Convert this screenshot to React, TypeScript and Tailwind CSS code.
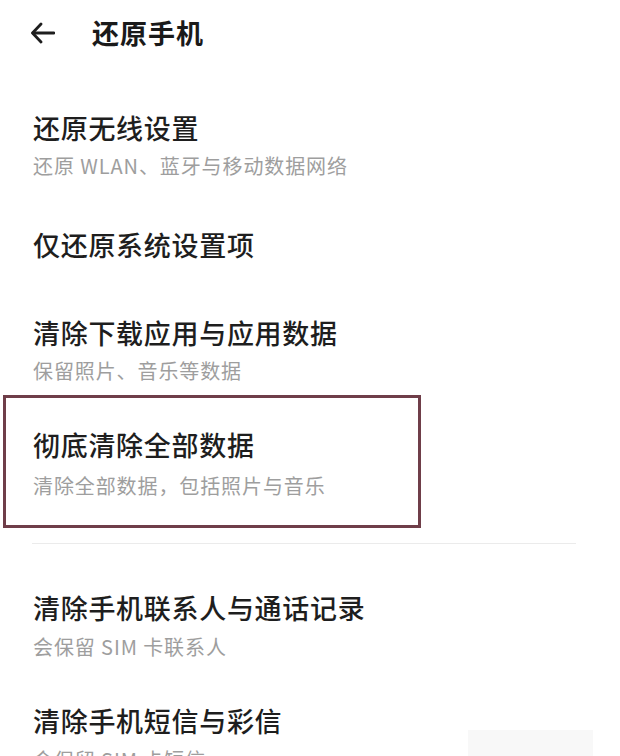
import React from "react";

const font = { fontFamily: '"Noto Sans CJK SC", "Noto Sans", sans-serif' };

function Title({ children }: { children: React.ReactNode }) {
  return (
    <div className="text-[27px] leading-[38px] tracking-[0.7px] text-[#1e1e1e] font-medium whitespace-nowrap">
      {children}
    </div>
  );
}

function Sub({ children, className = "" }: { children: React.ReactNode; className?: string }) {
  return (
    <div className={"text-[20px] leading-[28px] tracking-[0.9px] text-[#9e9e9e] whitespace-nowrap " + className}>
      {children}
    </div>
  );
}

export default function App() {
  return (
    <div
      className="relative w-[620px] h-[756px] overflow-hidden bg-white flex flex-col"
      style={font}
    >
      <div className="h-[66px] flex items-center pl-[31px] shrink-0">
        <svg width="24" height="22" viewBox="0 0 24 22" fill="none" stroke="#1e1e1e" strokeWidth="2.8" strokeLinecap="round" strokeLinejoin="round">
          <path d="M23 11H2" />
          <path d="M10 2L1.5 11L10 20" />
        </svg>
        <div className="ml-[37px] text-[27px] leading-[38px] tracking-[1px] font-bold text-[#1a1a1a]">
          还原手机
        </div>
      </div>

      <div className="pl-[33px] pt-[43px] shrink-0">
        <Title>还原无线设置</Title>
        <Sub className="mt-[5px]">还原 WLAN、蓝牙与移动数据网络</Sub>
      </div>

      <div className="pl-[33px] pt-[46px] shrink-0">
        <Title>仅还原系统设置项</Title>
      </div>

      <div className="pl-[33px] pt-[50px] shrink-0">
        <Title>清除下载应用与应用数据</Title>
        <Sub className="mt-[5px]">保留照片、音乐等数据</Sub>
      </div>

      <div className="ml-[3px] mt-[10px] w-[418px] border-[3px] border-[#6f3e49] pl-[27px] pt-[28px] pb-[25px] shrink-0">
        <Title>彻底清除全部数据</Title>
        <Sub className="mt-[8px]">清除全部数据，包括照片与音乐</Sub>
      </div>

      <div className="ml-[32px] mt-[15px] w-[544px] h-px bg-[#ebebeb] shrink-0" />

      <div className="pl-[33px] pt-[45px] shrink-0">
        <Title>清除手机联系人与通话记录</Title>
        <Sub className="mt-[6px]">会保留 SIM 卡联系人</Sub>
      </div>

      <div className="pl-[33px] pt-[41px] shrink-0">
        <Title>清除手机短信与彩信</Title>
        <Sub className="mt-[6px]">会保留 SIM 卡短信</Sub>
      </div>

      <div className="absolute left-[468px] top-[730px] w-[125px] h-[26px] bg-[#f8f8f8]" />
    </div>
  );
}
